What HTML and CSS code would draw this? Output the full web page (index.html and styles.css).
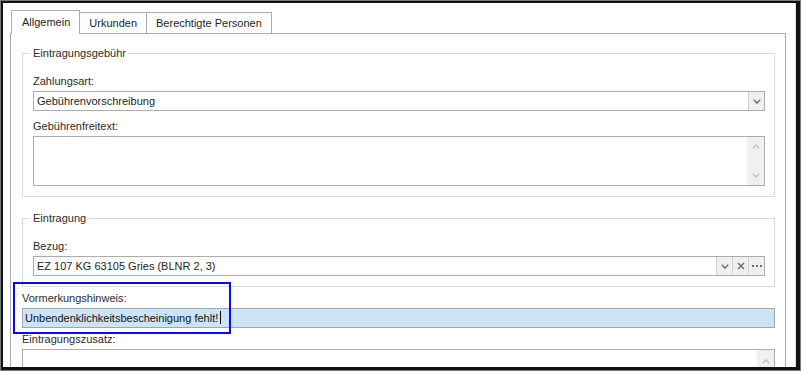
FILE: index.html
```html
<!DOCTYPE html>
<html lang="de">
<head>
    <meta charset="UTF-8">
    <title>Eintragung</title>
    <link rel="stylesheet" href="styles.css">
</head>
<body>
    <div class="frame">
        <div class="window">
            <div class="content">
                <div class="tabs">
                    <div class="tab active">Allgemein</div>
                    <div class="tab">Urkunden</div>
                    <div class="tab">Berechtigte Personen</div>
                </div>

                <div class="tab-page">
                    <fieldset class="group">
                        <legend>Eintragungsgebühr</legend>
                        <div class="field-label">Zahlungsart:</div>
                        <div class="combo">
                            <span class="combo-text">Gebührenvorschreibung</span>
                            <span class="combo-btn">
                                <svg width="8" height="5" viewBox="0 0 8 5"><polyline points="0.8,0.8 4,4 7.2,0.8" /></svg>
                            </span>
                        </div>
                        <div class="field-label gap">Gebührenfreitext:</div>
                        <div class="memo">
                            <div class="memo-text"></div>
                            <div class="scroll">
                                <svg width="8" height="5" viewBox="0 0 8 5"><polyline points="0.8,4.2 4,1 7.2,4.2" /></svg>
                                <svg width="8" height="5" viewBox="0 0 8 5"><polyline points="0.8,0.8 4,4 7.2,0.8" /></svg>
                            </div>
                        </div>
                    </fieldset>

                    <fieldset class="group second">
                        <legend>Eintragung</legend>
                        <div class="field-label">Bezug:</div>
                        <div class="combo">
                            <span class="combo-text">EZ 107 KG 63105 Gries (BLNR 2, 3)</span>
                            <span class="combo-btn">
                                <svg width="8" height="5" viewBox="0 0 8 5"><polyline points="0.8,0.8 4,4 7.2,0.8" /></svg>
                            </span>
                            <span class="combo-btn">
                                <svg width="8" height="8" viewBox="0 0 8 8"><path d="M1 1L7 7M7 1L1 7" /></svg>
                            </span>
                            <span class="combo-btn">
                                <svg class="dots" width="10" height="2" viewBox="0 0 10 2"><rect x="0" y="0" width="2" height="2" /><rect x="4" y="0" width="2" height="2" /><rect x="8" y="0" width="2" height="2" /></svg>
                            </span>
                        </div>
                    </fieldset>

                    <div class="hint">
                        <div class="highlight"></div>
                        <div class="field-label">Vormerkungshinweis:</div>
                        <div class="edit focused">Unbendenklichkeitsbescheinigung fehlt!<span class="caret"></span></div>
                    </div>

                    <div class="field-label extra">Eintragungszusatz:</div>
                    <div class="memo wide">
                        <div class="memo-text"></div>
                        <div class="scroll">
                            <svg width="8" height="5" viewBox="0 0 8 5"><polyline points="0.8,4.2 4,1 7.2,4.2" /></svg>
                        </div>
                    </div>
                </div>
            </div>
        </div>
    </div>
</body>
</html>
```

FILE: styles.css
```css
body {
    margin: 0;
    font-family: "Liberation Sans", Arial, sans-serif;
    font-size: 11px;
    line-height: 13px;
    color: #1e1e1e;
    background: #fff;
}
.frame {
    width: 801px;
    height: 371px;
    box-sizing: border-box;
    border: 1px solid #7a7a7a;
}
.window {
    height: 100%;
    box-sizing: border-box;
    border-style: solid;
    border-color: #111;
    border-width: 2px 4px 3px 2px;
}
.content {
    height: 100%;
    box-sizing: border-box;
    border-right: 1px solid #e2e2e2;
    padding-top: 7px;
    display: flex;
    flex-direction: column;
    overflow: hidden;
}

/* tabs */
.tabs {
    display: flex;
    align-items: flex-end;
    margin-left: 8px;
}
.tab {
    height: 20px;
    line-height: 21px;
    padding: 0 9px;
    border: 1px solid #acacac;
    border-bottom: none;
    border-left: none;
    background: #fff;
}
.tab.active {
    height: 23px;
    line-height: 23px;
    padding: 0 9px 0 10px;
    border-left: 1px solid #acacac;
    margin-bottom: -1px;
    position: relative;
    z-index: 1;
}
.tab-page {
    flex: 1;
    margin: 0 9px 0 7px;
    border: 1px solid #acacac;
    border-bottom: none;
    padding: 13px 10px 0 11px;
}

/* group boxes */
.group {
    margin: 0;
    min-width: 0;
    border: 1px solid #dadada;
    padding: 15px 9px 10px 10px;
}
.group.second {
    margin-top: 15px;
}
.group legend {
    padding: 0 2px 0 3px;
    margin-left: -3px;
    color: #2b2b2b;
}
.field-label {
    height: 13px;
    margin-bottom: 3px;
    color: #2b2b2b;
}
.field-label.gap {
    margin-top: 9px;
}

/* combo box */
.combo {
    height: 20px;
    box-sizing: border-box;
    border: 1px solid #acacac;
    display: flex;
    background: #fff;
}
.combo-text {
    flex: 1;
    padding-left: 3px;
    line-height: 18px;
}
.combo-btn {
    width: 15px;
    border-left: 1px solid #d0d0d0;
    background: #efefef;
    display: flex;
    align-items: center;
    justify-content: center;
}
.combo-btn svg {
    fill: none;
    stroke: #6f6f6f;
    stroke-width: 1.5;
}
.combo-btn svg.dots {
    fill: #707070;
    stroke: none;
}

/* memo */
.memo {
    height: 50px;
    box-sizing: border-box;
    border: 1px solid #acacac;
    display: flex;
}
.memo-text {
    flex: 1;
}
.scroll {
    width: 17px;
    background: #f0f0f0;
    display: flex;
    flex-direction: column;
    align-items: center;
    justify-content: space-between;
    padding: 7px 0;
}
.scroll svg {
    fill: none;
    stroke: #c3c3c3;
    stroke-width: 1.5;
}
.memo.wide .scroll {
    justify-content: flex-start;
    padding-top: 9px;
}

/* Vormerkungshinweis */
.hint {
    position: relative;
    margin-top: 5px;
}
.highlight {
    position: absolute;
    left: -9px;
    top: -10px;
    width: 218px;
    height: 52px;
    box-sizing: border-box;
    border: 2px solid #0a0af5;
}
.edit {
    height: 20px;
    box-sizing: border-box;
    border: 1px solid #a5a5a5;
    padding-left: 2px;
    line-height: 18px;
}
.edit.focused {
    background: #cce4f7;
    color: #111;
}
.caret {
    display: inline-block;
    width: 1px;
    height: 13px;
    margin-left: 2px;
    background: #000;
    vertical-align: -2px;
}
.field-label.extra {
    margin-top: 5px;
}
```
